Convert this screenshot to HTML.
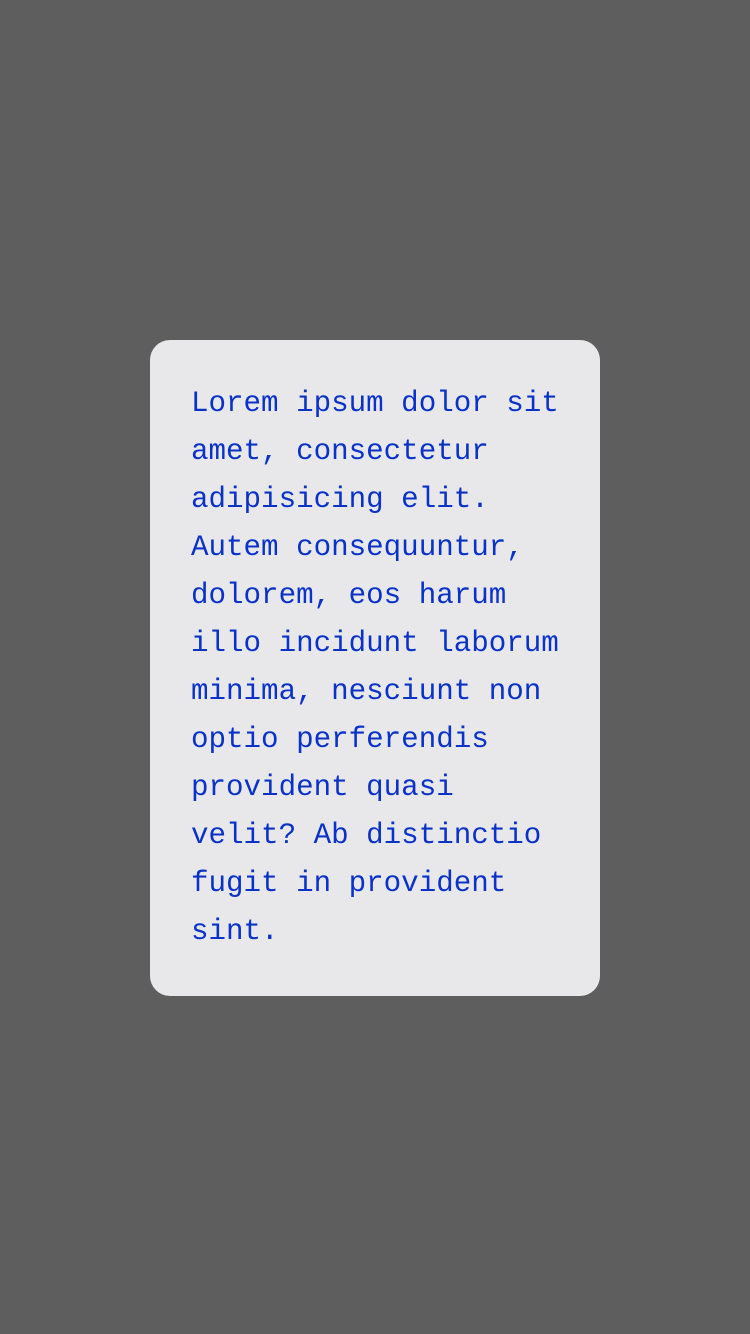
<!DOCTYPE html>
<html><head><meta charset="utf-8"><style>
html,body{margin:0;padding:0;width:750px;height:1334px;background:#5e5e5e;overflow:hidden}
.card{position:absolute;left:150px;top:340px;width:450px;height:656px;box-sizing:border-box;background:#e8e8ea;border-radius:20px;padding:40px 30px 40px 41px}
p{margin:0;font-family:"Liberation Mono",monospace;font-size:29.2px;line-height:48px;color:#0a32c8;white-space:pre}
</style></head><body>
<div class="card"><p>Lorem ipsum dolor sit
amet, consectetur
adipisicing elit.
Autem consequuntur,
dolorem, eos harum
illo incidunt laborum
minima, nesciunt non
optio perferendis
provident quasi
velit? Ab distinctio
fugit in provident
sint.</p></div>
</body></html>
